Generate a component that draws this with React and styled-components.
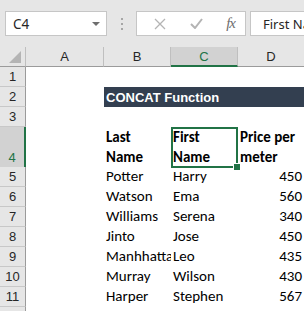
import styled, { createGlobalStyle } from 'styled-components';

const GlobalStyle = createGlobalStyle`
  html, body {
    margin: 0;
    padding: 0;
    background: #ffffff;
    overflow: hidden;
  }
`;

const COLS = '26px 78px 67px 67px 67px';
const GREEN = '#217346';

const Window = styled.div`
  width: 304px;
  height: 311px;
  overflow: hidden;
  background: #ffffff;
`;

const Toolbar = styled.div`
  display: flex;
  align-items: center;
  height: 47px;
  padding: 0 0 0 5px;
  background: #e6e6e6;
  box-sizing: border-box;
`;

const NameBox = styled.div`
  display: flex;
  align-items: center;
  justify-content: space-between;
  width: 102px;
  height: 25px;
  padding: 0 6px 0 7px;
  box-sizing: border-box;
  background: #ffffff;
  border: 1px solid #c6c6c6;
  font-family: 'Noto Sans', 'Open Sans', sans-serif;
  font-size: 13.5px;
  color: #262626;
`;

const Caret = styled.span`
  width: 0;
  height: 0;
  border-left: 4px solid transparent;
  border-right: 4px solid transparent;
  border-top: 4px solid #6e6e6e;
`;

const Grip = styled.div`
  display: flex;
  flex-direction: column;
  gap: 3px;
  margin: 0 13px 0 14px;

  span {
    width: 2px;
    height: 2px;
    background: #a6a6a6;
  }
`;

const FxBox = styled.div`
  display: flex;
  align-items: center;
  justify-content: space-between;
  width: 110px;
  height: 25px;
  padding: 0 10px 0 17px;
  box-sizing: border-box;
  background: #ffffff;
  border: 1px solid #c6c6c6;
`;

const FxLabel = styled.span`
  font-family: 'Liberation Serif', serif;
  font-style: italic;
  font-size: 15px;
  color: #6e6e6e;
  letter-spacing: -1px;
`;

const FormulaInput = styled.div`
  flex: 1;
  height: 25px;
  margin-left: 4px;
  padding-left: 12px;
  box-sizing: border-box;
  display: flex;
  align-items: center;
  background: #ffffff;
  border: 1px solid #c6c6c6;
  border-right: none;
  font-family: 'Noto Sans', 'Open Sans', sans-serif;
  font-size: 13px;
  color: #262626;
  white-space: nowrap;
  overflow: hidden;
`;

const Sheet = styled.div`
  display: flex;
  flex-direction: column;
`;

const Row = styled.div`
  display: grid;
  grid-template-columns: ${COLS};
  height: ${(p) => p.$h || 20}px;
`;

const Corner = styled.div`
  display: flex;
  align-items: flex-end;
  justify-content: flex-end;
  padding: 0 4px 3px 0;
  background: #e6e6e6;
  border-right: 1px solid #bfbfbf;
  border-bottom: 1px solid #9b9b9b;
`;

const ColHead = styled.div`
  display: flex;
  align-items: center;
  justify-content: center;
  font-family: 'Liberation Sans', Arial, sans-serif;
  font-size: 13px;
  color: ${(p) => (p.$active ? GREEN : '#262626')};
  background: ${(p) => (p.$active ? '#d2d2d2' : '#e6e6e6')};
  border-right: 1px solid #bfbfbf;
  border-bottom: ${(p) => (p.$active ? `2px solid ${GREEN}` : '1px solid #9b9b9b')};
  padding-top: ${(p) => (p.$active ? '1px' : '0')};
`;

const RowHead = styled.div`
  display: flex;
  align-items: flex-end;
  justify-content: center;
  padding-bottom: 2px;
  box-sizing: border-box;
  font-family: 'Liberation Sans', Arial, sans-serif;
  font-size: 13px;
  color: ${(p) => (p.$active ? GREEN : '#262626')};
  background: ${(p) => (p.$active ? '#d2d2d2' : '#e6e6e6')};
  border-bottom: 1px solid #c8c8c8;
  border-right: ${(p) => (p.$active ? `2px solid ${GREEN}` : '1px solid #9b9b9b')};
`;

const Cell = styled.div`
  position: relative;
  display: flex;
  flex-direction: column;
  justify-content: flex-end;
  align-items: ${(p) => (p.$num ? 'flex-end' : 'flex-start')};
  padding: 0 3px 1px 2px;
  box-sizing: border-box;
  font-family: 'Carlito', 'Lato', sans-serif;
  font-size: 15px;
  line-height: 20px;
  font-weight: ${(p) => (p.$bold ? 700 : 400)};
  color: #000000;
  white-space: nowrap;
  overflow: ${(p) => (p.$selected ? 'visible' : 'hidden')};
  box-shadow: ${(p) => (p.$selected ? `inset 0 0 0 2px ${GREEN}` : 'none')};
`;

const FillHandle = styled.span`
  position: absolute;
  right: -3px;
  bottom: -3px;
  width: 6px;
  height: 6px;
  background: ${GREEN};
  border: 1px solid #ffffff;
  z-index: 2;
`;

const TitleBar = styled.div`
  grid-column: 3 / -1;
  display: flex;
  align-items: center;
  padding-left: 2px;
  background: #333f50;
  color: #ffffff;
  font-family: 'Liberation Sans', Arial, sans-serif;
  font-weight: 700;
  font-size: 13px;
  white-space: nowrap;
  overflow: hidden;
`;

const data = [
  ['Potter', 'Harry', 450],
  ['Watson', 'Ema', 560],
  ['Williams', 'Serena', 340],
  ['Jinto', 'Jose', 450],
  ['Manhhattan', 'Leo', 435],
  ['Murray', 'Wilson', 430],
  ['Harper', 'Stephen', 567],
];

const Empty = ({ n, h }) => (
  <Row $h={h}>
    <RowHead>{n}</RowHead>
    <Cell />
    <Cell />
    <Cell />
    <Cell />
  </Row>
);

export default function App() {
  return (
    <Window>
      <GlobalStyle />
      <Toolbar>
        <NameBox>
          C4
          <Caret />
        </NameBox>
        <Grip>
          <span />
          <span />
          <span />
        </Grip>
        <FxBox>
          <svg width="12" height="12" viewBox="0 0 12 12">
            <path d="M1 1 L11 11 M11 1 L1 11" stroke="#b4b4b4" strokeWidth="1.3" fill="none" />
          </svg>
          <svg width="13" height="11" viewBox="0 0 13 11">
            <path d="M1 6 L5 10 L12 1" stroke="#b4b4b4" strokeWidth="2" fill="none" />
          </svg>
          <FxLabel>fx</FxLabel>
        </FxBox>
        <FormulaInput>First Name</FormulaInput>
      </Toolbar>
      <Sheet>
        <Row $h={20}>
          <Corner>
            <svg width="12" height="12" viewBox="0 0 12 12">
              <polygon points="12,0 12,12 0,12" fill="#b4b4b4" />
            </svg>
          </Corner>
          <ColHead>A</ColHead>
          <ColHead>B</ColHead>
          <ColHead $active>C</ColHead>
          <ColHead>D</ColHead>
        </Row>
        <Empty n={1} />
        <Row>
          <RowHead>2</RowHead>
          <Cell />
          <TitleBar>CONCAT Function</TitleBar>
        </Row>
        <Empty n={3} />
        <Row $h={40}>
          <RowHead $active>4</RowHead>
          <Cell />
          <Cell $bold>
            <span>Last</span>
            <span>Name</span>
          </Cell>
          <Cell $bold $selected>
            <span>First</span>
            <span>Name</span>
            <FillHandle />
          </Cell>
          <Cell $bold>
            <span>Price per</span>
            <span>meter</span>
          </Cell>
        </Row>
        {data.map(([last, first, price], i) => (
          <Row key={last}>
            <RowHead>{i + 5}</RowHead>
            <Cell />
            <Cell>{last}</Cell>
            <Cell>{first}</Cell>
            <Cell $num>{price}</Cell>
          </Row>
        ))}
        <Empty n={12} />
      </Sheet>
    </Window>
  );
}
